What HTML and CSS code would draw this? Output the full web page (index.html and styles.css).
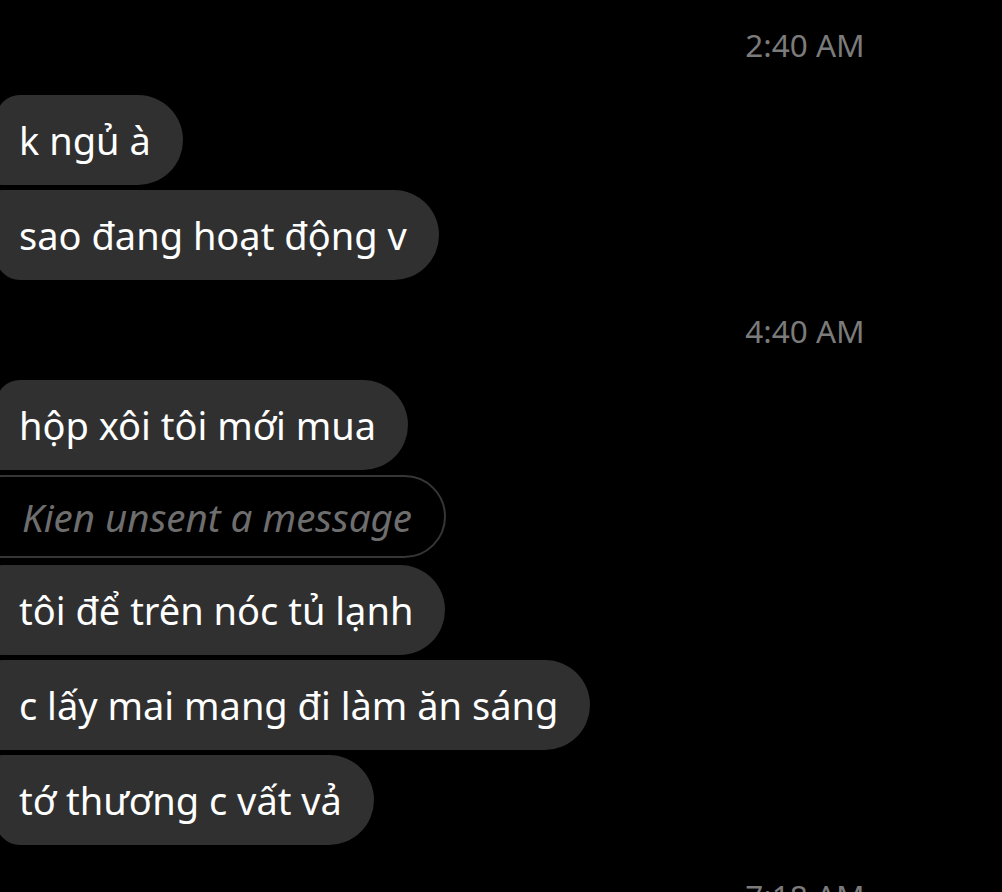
FILE: index.html
```html
<!DOCTYPE html>
<html lang="vi">
<head>
<meta charset="utf-8">
<title>Messages</title>
<link rel="stylesheet" href="styles.css">
</head>
<body>
<main class="thread">
  <div class="stamp stamp-first"><span>2:40 AM</span></div>
  <div class="group">
    <div class="bubble first">k ngủ à</div>
    <div class="bubble last">sao đang hoạt động v</div>
  </div>
  <div class="stamp"><span>4:40 AM</span></div>
  <div class="group">
    <div class="bubble first">hộp xôi tôi mới mua</div>
    <div class="bubble unsent">Kien unsent a message</div>
    <div class="bubble">tôi để trên nóc tủ lạnh</div>
    <div class="bubble">c lấy mai mang đi làm ăn sáng</div>
    <div class="bubble last">tớ thương c vất vả</div>
  </div>
  <div class="stamp"><span>7:18 AM</span></div>
</main>
</body>
</html>
```
FILE: styles.css
```css
html, body {
  margin: 0;
  padding: 0;
  background: #000;
  width: 1002px;
  height: 892px;
  overflow: hidden;
}
body {
  font-family: "Noto Sans", "Open Sans", sans-serif;
  color: #fff;
}
.thread {
  display: flex;
  flex-direction: column;
  margin-left: -4px;
}
.stamp {
  height: 100px;
  display: flex;
  align-items: center;
  justify-content: center;
  padding-left: 612px;
  color: #7b7b7b;
  font-size: 31.5px;
}
.stamp-first {
  height: 88px;
  margin-bottom: 7px;
}
.group {
  display: flex;
  flex-direction: column;
  align-items: flex-start;
  gap: 5px;
}
.bubble {
  box-sizing: border-box;
  height: 90px;
  display: flex;
  align-items: center;
  padding: 0 32px 0 23px;
  background: #303030;
  border-radius: 6px 45px 45px 6px;
  font-size: 38px;
  white-space: nowrap;
}
.bubble.first {
  border-top-left-radius: 24px;
}
.bubble.last {
  border-bottom-left-radius: 24px;
}
.bubble.unsent {
  background: transparent;
  border: 2px solid #363636;
  height: 83px;
  margin-bottom: 2px;
  padding-left: 24px;
  color: #6e6e6e;
  font-size: 38.5px;
  font-style: italic;
}
```
